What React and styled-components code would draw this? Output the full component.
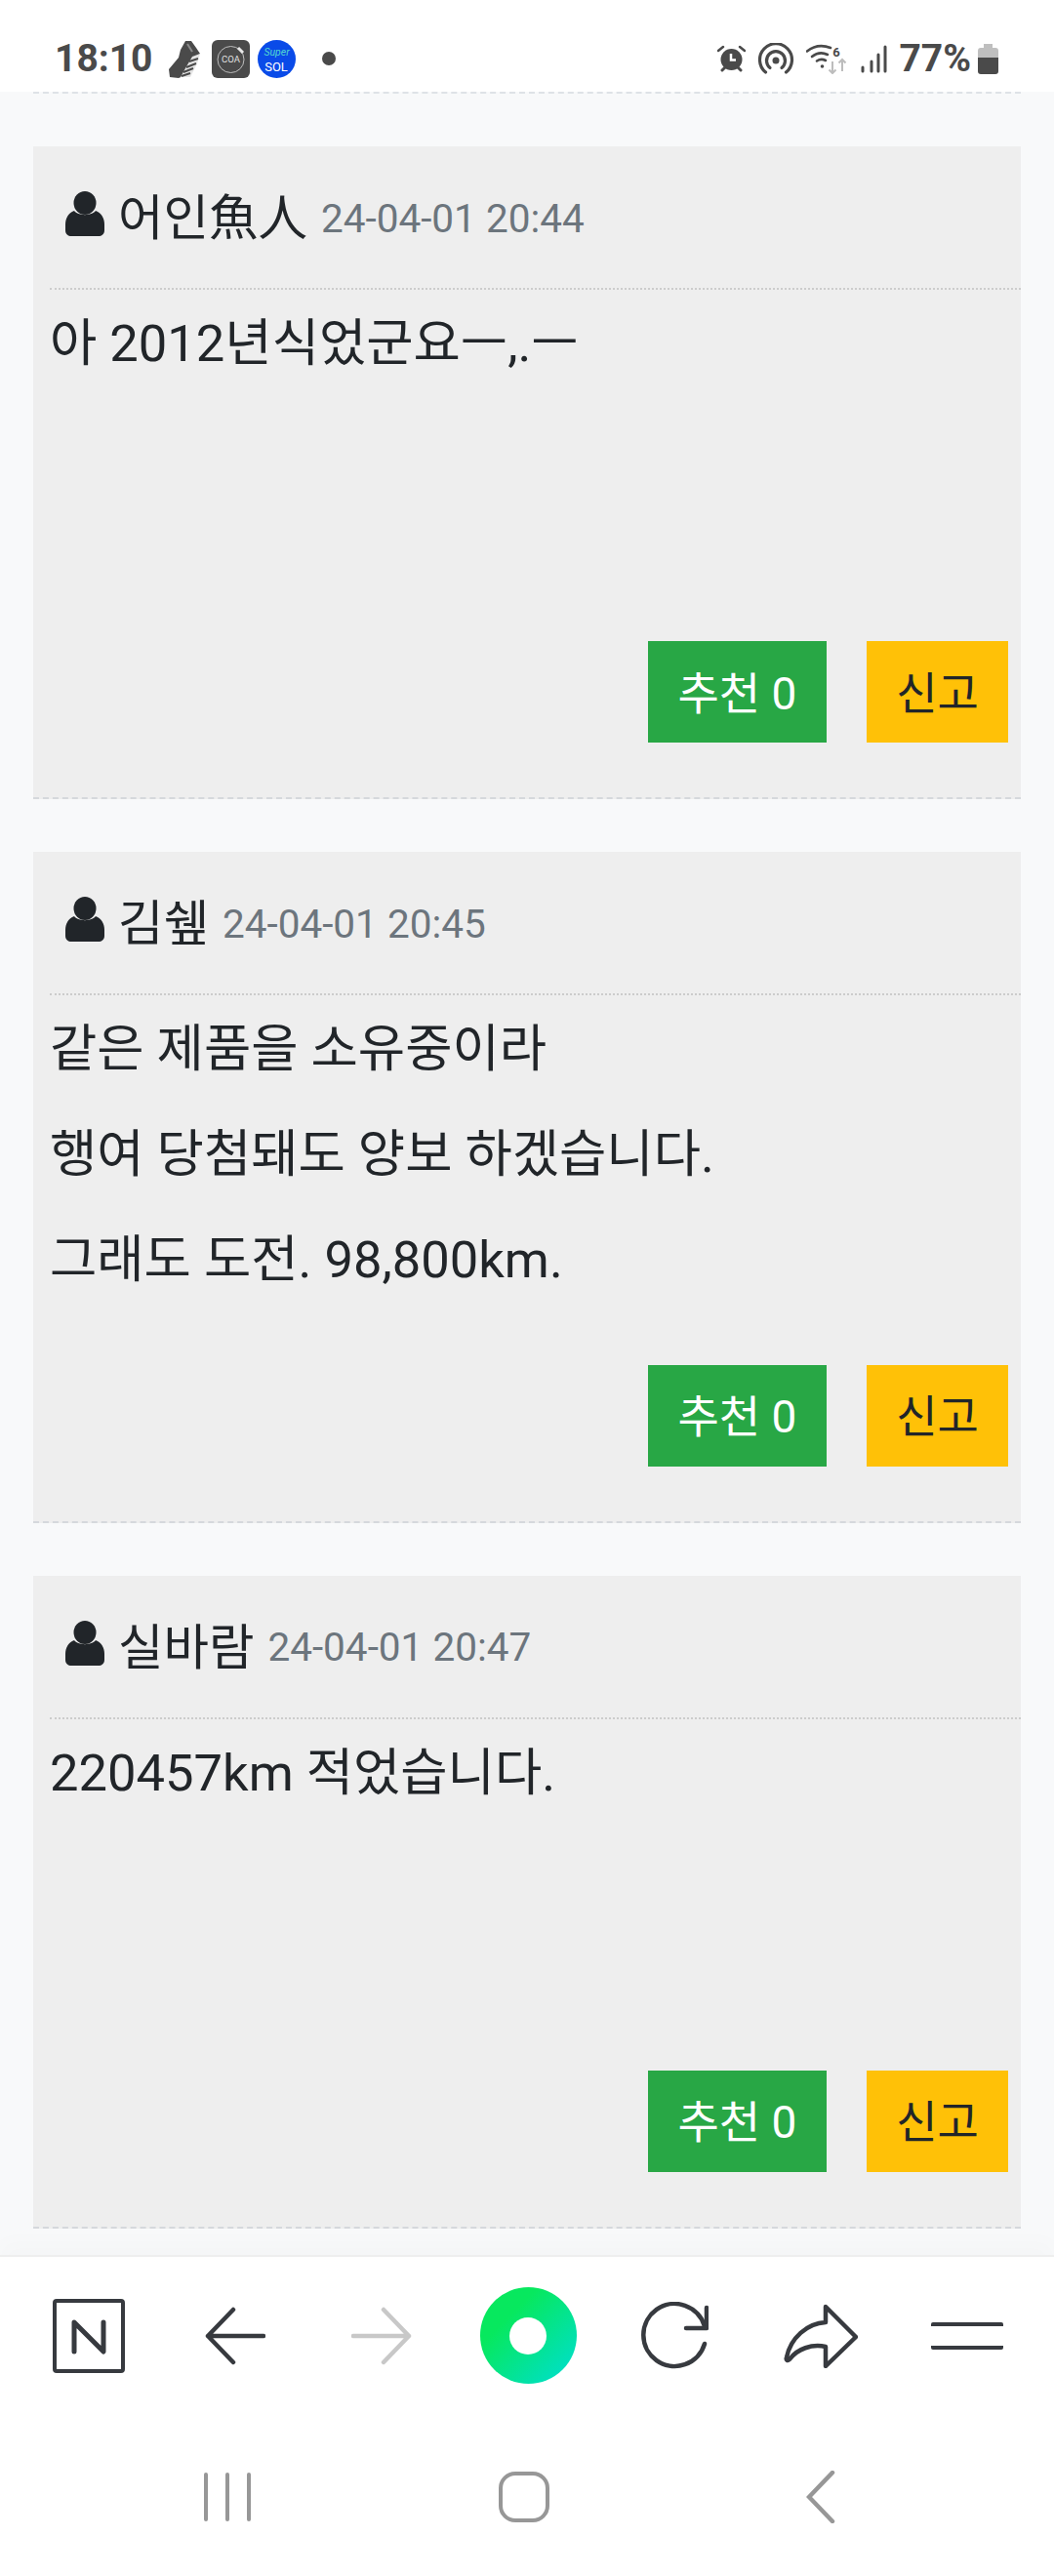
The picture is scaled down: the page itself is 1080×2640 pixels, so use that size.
import React from 'react';
import styled, { createGlobalStyle } from 'styled-components';

const GlobalStyle = createGlobalStyle`
  html, body {
    margin: 0;
    padding: 0;
    background: #f8f9fa;
  }
  * {
    box-sizing: border-box;
  }
  body {
    font-family: Roboto, "Noto Sans CJK KR", sans-serif;
    color: #212529;
  }
`;

const comments = [
  { id: 1, name: '어인魚人', date: '24-04-01 20:44', lines: ['아 2012년식었군요ㅡ,.ㅡ'] },
  {
    id: 2,
    name: '김쉪',
    date: '24-04-01 20:45',
    lines: ['같은 제품을 소유중이라', '행여 당첨돼도 양보 하겠습니다.', '그래도 도전. 98,800km.'],
  },
  { id: 3, name: '실바람', date: '24-04-01 20:47', lines: ['220457km 적었습니다.'] },
];

const BatterySvg = styled.svg`
  margin-left: -5px;
`;

const ArrowSvg = styled.svg`
  transform: ${(p) => (p.$flip ? 'scaleX(-1)' : 'none')};
`;

const BackSvg = styled.svg`
  margin-top: 58px;
`;

const ShoeIcon = () => (
  <svg width="36" height="39" viewBox="0 0 36 39">
    <path d="M17 1l6 0 5 7 4 6-5 3-7 13-3 6-7 3-9-1-1-8 5-6 5-6 2-8z" fill="#4a4a4a" />
    <path d="M32 14l-3 10-7 14H12l5-9 7-12z" fill="#e4e4e4" />
    <path d="M30 19l-9 3M28 24l-10 4M25 29l-10 4M22 34l-9 3" stroke="#4a4a4a" strokeWidth="2" fill="none" />
    <path d="M19 4l5 8" stroke="#8a8a8a" strokeWidth="2" fill="none" />
  </svg>
);

const CoaIcon = () => (
  <svg width="39" height="39" viewBox="0 0 39 39">
    <rect width="39" height="39" rx="6" fill="#4a4a4a" />
    <circle cx="19.5" cy="20" r="13.5" fill="none" stroke="#bdbdbd" strokeWidth="1" />
    <path d="M27 8l5 5" stroke="#e8e8e8" strokeWidth="3" />
    <text x="19.5" y="23" fontFamily="Roboto" fontSize="9.5" fill="#e0e0e0" textAnchor="middle">COA</text>
  </svg>
);

const SolIcon = () => (
  <svg width="39" height="39" viewBox="0 0 39 39">
    <circle cx="19.5" cy="19.5" r="19.5" fill="#0a4be8" />
    <text x="19.5" y="16" fontFamily="Roboto" fontStyle="italic" fontSize="10.5" fill="#52d6d0" textAnchor="middle">Super</text>
    <text x="19" y="32" fontFamily="Roboto" fontSize="13" fill="#fff" textAnchor="middle">SOL</text>
  </svg>
);

const AlarmIcon = () => (
  <svg width="29" height="28" viewBox="0 0 29 28">
    <circle cx="14.5" cy="15" r="11" fill="#4a4a4a" />
    <path d="M14 9v6.5h5" stroke="#fff" strokeWidth="2.5" fill="none" />
    <path d="M1 6l5-4M28 6l-5-4" stroke="#4a4a4a" strokeWidth="2.5" strokeLinecap="round" />
    <path d="M5 26l3-3M24 26l-3-3" stroke="#4a4a4a" strokeWidth="3" strokeLinecap="round" />
  </svg>
);

const HotspotIcon = () => (
  <svg width="38" height="32" viewBox="0 0 38 32">
    <circle cx="19" cy="18" r="3.5" fill="#4a4a4a" />
    <path d="M8.5 30A16.5 16.5 0 1 1 29.5 30" stroke="#4a4a4a" strokeWidth="3.2" fill="none" strokeLinecap="round" />
    <path d="M13 25.5A9.5 9.5 0 1 1 25 25.5" stroke="#4a4a4a" strokeWidth="3.2" fill="none" strokeLinecap="round" />
  </svg>
);

const WifiIcon = () => (
  <svg width="44" height="32" viewBox="0 0 44 32">
    <path d="M1 8.5C8 3 17 2 25 5" stroke="#4a4a4a" strokeWidth="2.6" fill="none" strokeLinecap="round" />
    <path d="M6 14c5-4 11-4.5 16-2" stroke="#4a4a4a" strokeWidth="2.6" fill="none" strokeLinecap="round" />
    <path d="M11 18.5c3-2 6-2 9-.5" stroke="#4a4a4a" strokeWidth="2.6" fill="none" strokeLinecap="round" />
    <circle cx="16.5" cy="24" r="1.8" fill="#4a4a4a" />
    <text x="31" y="14" fontFamily="Roboto" fontWeight="700" fontSize="13" fill="#4a4a4a" textAnchor="middle">6</text>
    <path d="M27 19v12M23.5 27.5l3.5 3.5 3.5-3.5" stroke="#bdbdbd" strokeWidth="2" fill="none" />
    <path d="M37 29V17M33.5 20.5l3.5-3.5 3.5 3.5" stroke="#bdbdbd" strokeWidth="2" fill="none" />
  </svg>
);

const SignalIcon = () => (
  <svg width="27" height="29" viewBox="0 0 27 29">
    <g stroke="#4a4a4a" strokeWidth="3" strokeLinecap="round">
      <path d="M2 23v4M11 17v10M18 10v17M25 2v25" />
    </g>
  </svg>
);

const BatteryIcon = () => (
  <BatterySvg width="21" height="31" viewBox="0 0 21 31">
    <path d="M6 0h9v4h3a3 3 0 0 1 3 3v7H0V7a3 3 0 0 1 3-3h3z" fill="#bfbfbf" />
    <path d="M0 14h21v14a3 3 0 0 1-3 3H3a3 3 0 0 1-3-3z" fill="#4a4a4a" />
  </BatterySvg>
);

const UserIcon = () => (
  <svg width="40" height="46" viewBox="0 0 40 46">
    <ellipse cx="20" cy="12" rx="11.5" ry="12" fill="#212529" />
    <path d="M9 20c4 5.500 18 5.500 22 0 6 2 9 8 9 14v6c0 4-3 6-6 6H6c-3 0-6-2-6-6v-6c0-6 3-12 9-14z" fill="#212529" />
  </svg>
);

const NaverIcon = () => (
  <svg width="74" height="76" viewBox="0 0 74 76">
    <rect x="2" y="2" width="70" height="72" rx="2" fill="none" stroke="#373a3f" strokeWidth="4" />
    <path d="M22 54V24l30 30V24" fill="none" stroke="#373a3f" strokeWidth="5" strokeLinecap="round" strokeLinejoin="round" />
  </svg>
);

const ArrowIcon = ({ flip, color }) => (
  <ArrowSvg $flip={flip} width="62" height="60" viewBox="0 0 62 60">
    <path d="M29 3L3 30l26 27M3 30h57" fill="none" stroke={color} strokeWidth="4.5" strokeLinecap="round" strokeLinejoin="round" />
  </ArrowSvg>
);

const ReloadIcon = () => (
  <svg width="70" height="70" viewBox="0 0 70 70">
    <path d="M66 43A32 32 0 1 1 66 25" fill="none" stroke="#373a3f" strokeWidth="4.5" strokeLinecap="round" />
    <path d="M68 6v21H47" fill="none" stroke="#373a3f" strokeWidth="4.5" strokeLinecap="round" strokeLinejoin="round" />
  </svg>
);

const ShareIcon = () => (
  <svg width="76" height="66" viewBox="0 0 76 66">
    <path
      d="M43 3l31 31-31 30V44C29 41 14 46 6 57c-2 2-4 1-3-2C7 35 24 20 43 19z"
      fill="none"
      stroke="#373a3f"
      strokeWidth="4.5"
      strokeLinejoin="round"
    />
  </svg>
);

const BackIcon = () => (
  <BackSvg width="30" height="54" viewBox="0 0 30 54">
    <path d="M27 2L3 27l24 25" fill="none" stroke="#979797" strokeWidth="4.5" strokeLinecap="round" />
  </BackSvg>
);

const Screen = styled.div`
  width: 1080px;
  height: 2640px;
  display: flex;
  flex-direction: column;
  overflow: hidden;
`;

const StatusBar = styled.header`
  height: 94px;
  padding: 26px 57px 0 56px;
  background: #fff;
  display: flex;
  align-items: flex-start;
  justify-content: space-between;
`;

const StatusGroup = styled.div`
  height: 68px;
  display: flex;
  align-items: center;
  gap: ${(p) => p.$gap}px;
`;

const StatusText = styled.span`
  font-size: 39px;
  font-weight: 700;
  line-height: 1;
  color: #4a4a4a;
  margin-right: ${(p) => p.$after || 0}px;
`;

const NotifDot = styled.span`
  width: 14px;
  height: 14px;
  border-radius: 50%;
  background: #4a4a4a;
  margin-left: 19px;
`;

const Main = styled.main`
  flex: 1;
  min-height: 0;
  padding: 0 34px;
  overflow: hidden;
`;

const TopRule = styled.div`
  border-top: 2px dashed #dee2e6;
  margin-bottom: 54px;
`;

const Card = styled.article`
  background: #eee;
  border-bottom: 2px dashed #d5d8dc;
  margin-bottom: 54px;
`;

const CardHeader = styled.div`
  height: 147px;
  margin-left: 17px;
  padding: 0 0 7px 16px;
  border-bottom: 2px dotted #ccc;
  display: flex;
  align-items: center;
`;

const Name = styled.strong`
  font-size: 50.5px;
  font-weight: 400;
  margin-left: 14px;
  margin-right: 14px;
`;

const DateText = styled.small`
  font-size: 40.5px;
  color: #6c757d;
  padding-top: 9px;
`;

const CardBody = styled.div`
  min-height: 360px;
  padding: 23px 0 32px 17px;
`;

const Line = styled.p`
  margin: 0 0 43.2px;
  font-size: 52.5px;
  line-height: 64.8px;
`;

const Actions = styled.div`
  display: flex;
  justify-content: flex-end;
  gap: 41px;
  padding: 0 13px 56px 0;
`;

const ActionButton = styled.button`
  height: 104px;
  width: ${(p) => p.$width}px;
  padding: 0 0 5px;
  border: 0;
  font-family: inherit;
  font-size: 46px;
  background: ${(p) => p.$bg};
  color: ${(p) => p.$fg};
`;

const BrowserNav = styled.nav`
  height: 163px;
  flex-shrink: 0;
  padding-left: 16px;
  background: #fff;
  border-top: 2px solid #eee;
  box-shadow: 0 -14px 20px rgba(0, 0, 0, 0.015);
  position: relative;
  display: grid;
  grid-template-columns: repeat(7, 150px);
  align-items: center;
  justify-items: center;
`;

const MainButton = styled.span`
  width: 99px;
  height: 99px;
  border-radius: 50%;
  background: linear-gradient(135deg, #07e85e 30%, #00dfc8 92%);
  display: flex;
  align-items: center;
  justify-content: center;
  &::after {
    content: '';
    width: 38px;
    height: 38px;
    border-radius: 50%;
    background: #fff;
  }
`;

const MenuIcon = styled.span`
  width: 74px;
  height: 28px;
  border-top: 4px solid #373a3f;
  border-bottom: 4px solid #373a3f;
  border-radius: 2px;
`;

const SystemNav = styled.footer`
  height: 166px;
  flex-shrink: 0;
  background: #fff;
  padding: 0 0 0 81px;
  display: grid;
  grid-template-columns: repeat(3, 304px);
  align-items: start;
  justify-items: center;
`;

const RecentIcon = styled.span`
  width: 48px;
  height: 50px;
  margin-top: 60px;
  display: flex;
  justify-content: space-between;
  i {
    width: 4px;
    border-radius: 2px;
    background: #979797;
  }
`;

const HomeIcon = styled.span`
  width: 52px;
  height: 52px;
  margin-top: 59px;
  border: 4.5px solid #979797;
  border-radius: 17px;
`;

const Comment = ({ name, date, lines }) => (
  <Card>
    <CardHeader>
      <UserIcon />
      <Name>{name}</Name>
      <DateText>{date}</DateText>
    </CardHeader>
    <CardBody>
      {lines.map((line) => (
        <Line key={line}>{line}</Line>
      ))}
    </CardBody>
    <Actions>
      <ActionButton $width={183} $bg="#28a745" $fg="#fff">추천 0</ActionButton>
      <ActionButton $width={145} $bg="#ffc107" $fg="#212529">신고</ActionButton>
    </Actions>
  </Card>
);

const App = () => {
  return (
    <Screen>
      <GlobalStyle />
      <StatusBar>
        <StatusGroup $gap={8}>
          <StatusText $after={8}>18:10</StatusText>
          <ShoeIcon />
          <CoaIcon />
          <SolIcon />
          <NotifDot />
        </StatusGroup>
        <StatusGroup $gap={12}>
          <AlarmIcon />
          <HotspotIcon />
          <WifiIcon />
          <SignalIcon />
          <StatusText>77%</StatusText>
          <BatteryIcon />
        </StatusGroup>
      </StatusBar>
      <Main>
        <TopRule />
        {comments.map((c) => (
          <Comment key={c.id} {...c} />
        ))}
      </Main>
      <BrowserNav>
        <NaverIcon />
        <ArrowIcon color="#373a3f" />
        <ArrowIcon flip color="#c8c8c8" />
        <MainButton />
        <ReloadIcon />
        <ShareIcon />
        <MenuIcon />
      </BrowserNav>
      <SystemNav>
        <RecentIcon>
          <i />
          <i />
          <i />
        </RecentIcon>
        <HomeIcon />
        <BackIcon />
      </SystemNav>
    </Screen>
  );
};

export default App;
